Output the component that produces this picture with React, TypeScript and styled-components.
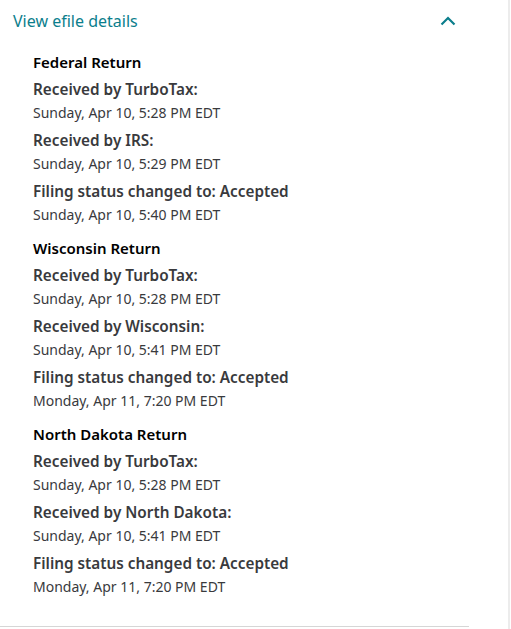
import React from "react";
import styled, { createGlobalStyle } from "styled-components";

const GlobalStyle = createGlobalStyle`
  body {
    margin: 0;
    background: #fff;
    font-family: "Noto Sans", "Liberation Sans", sans-serif;
  }
`;

const Page = styled.div`
  width: 510px;
  border-right: 2px solid #ececec;
  min-height: 629px;
  box-sizing: border-box;
`;

const Panel = styled.div`
  width: 469px;
  padding-left: 9px;
  box-sizing: border-box;
  border-bottom: 1px solid #d6d6d6;
  padding-bottom: 28px;
`;

const Header = styled.button`
  display: flex;
  align-items: center;
  justify-content: space-between;
  width: 100%;
  height: 42px;
  padding: 0 13px 0 4px;
  border: none;
  background: none;
  cursor: pointer;
  font-family: inherit;
  font-size: 16px;
  color: #0b7e8c;
`;

const Chevron = styled.svg`
  width: 16px;
  height: 10px;
`;

const Content = styled.div`
  padding: 9px 0 0 24px;
`;

const Section = styled.section`
  margin-bottom: 11px;

  &:last-child {
    margin-bottom: 0;
  }
`;

const SectionTitle = styled.h3`
  margin: 0;
  font-size: 15px;
  line-height: 22px;
  font-weight: 600;
  color: #000;
`;

const Event = styled.div`
  margin-top: 4px;
`;

const Label = styled.div`
  font-size: 15.3px;
  line-height: 24px;
  font-weight: 600;
  color: #393a3d;
`;

const When = styled.div`
  font-size: 14px;
  line-height: 23px;
  color: #393a3d;
`;

type Entry = { label: string; when: string };

const returns: { title: string; events: Entry[] }[] = [
  {
    title: "Federal Return",
    events: [
      { label: "Received by TurboTax:", when: "Sunday, Apr 10, 5:28 PM EDT" },
      { label: "Received by IRS:", when: "Sunday, Apr 10, 5:29 PM EDT" },
      { label: "Filing status changed to: Accepted", when: "Sunday, Apr 10, 5:40 PM EDT" },
    ],
  },
  {
    title: "Wisconsin Return",
    events: [
      { label: "Received by TurboTax:", when: "Sunday, Apr 10, 5:28 PM EDT" },
      { label: "Received by Wisconsin:", when: "Sunday, Apr 10, 5:41 PM EDT" },
      { label: "Filing status changed to: Accepted", when: "Monday, Apr 11, 7:20 PM EDT" },
    ],
  },
  {
    title: "North Dakota Return",
    events: [
      { label: "Received by TurboTax:", when: "Sunday, Apr 10, 5:28 PM EDT" },
      { label: "Received by North Dakota:", when: "Sunday, Apr 10, 5:41 PM EDT" },
      { label: "Filing status changed to: Accepted", when: "Monday, Apr 11, 7:20 PM EDT" },
    ],
  },
];

const App: React.FC = () => {
  return (
    <>
      <GlobalStyle />
      <Page>
        <Panel>
          <Header>
            <span>View efile details</span>
            <Chevron viewBox="0 0 16 10" fill="none">
              <path d="M1.5 8.5 L8 2 L14.5 8.5" stroke="#0b7e8c" strokeWidth="2.2" />
            </Chevron>
          </Header>
          <Content>
            {returns.map((r) => (
              <Section key={r.title}>
                <SectionTitle>{r.title}</SectionTitle>
                {r.events.map((e) => (
                  <Event key={e.label}>
                    <Label>{e.label}</Label>
                    <When>{e.when}</When>
                  </Event>
                ))}
              </Section>
            ))}
          </Content>
        </Panel>
      </Page>
    </>
  );
};

export default App;
